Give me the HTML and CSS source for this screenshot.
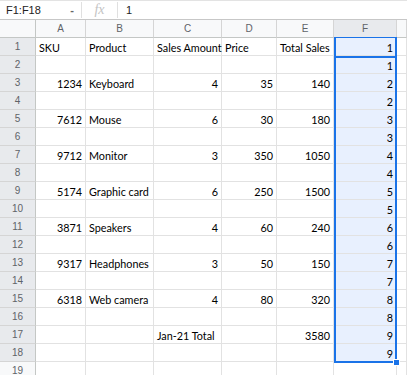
FILE: index.html
```html
<!DOCTYPE html>
<html lang="en">
<head>
    <meta charset="UTF-8">
    <meta name="viewport" content="width=device-width, initial-scale=1.0">
    <title>Sheet - F1:F18</title>
    <link rel="stylesheet" href="styles.css">
</head>
<body>
    <div class="formula-bar">
        <div class="name-box">
            <span>F1:F18</span>
            <span class="name-arrow">-</span>
        </div>
        <div class="fx">fx</div>
        <div class="formula-value">1</div>
    </div>

    <div class="sheet" id="sheet">
        <div class="selection"></div>
        <div class="active-cell"></div>
        <div class="fill-handle"></div>
    </div>

    <script>
        const columns = ['A', 'B', 'C', 'D', 'E', 'F', ''];

        // one entry per row: A..E, F holds the numbers in the selected range
        const rows = [
            ['SKU', 'Product', 'Sales Amount', 'Price', 'Total Sales', 1],
            ['', '', '', '', '', 1],
            [1234, 'Keyboard', 4, 35, 140, 2],
            ['', '', '', '', '', 2],
            [7612, 'Mouse', 6, 30, 180, 3],
            ['', '', '', '', '', 3],
            [9712, 'Monitor', 3, 350, 1050, 4],
            ['', '', '', '', '', 4],
            [5174, 'Graphic card', 6, 250, 1500, 5],
            ['', '', '', '', '', 5],
            [3871, 'Speakers', 4, 60, 240, 6],
            ['', '', '', '', '', 6],
            [9317, 'Headphones', 3, 50, 150, 7],
            ['', '', '', '', '', 7],
            [6318, 'Web camera', 4, 80, 320, 8],
            ['', '', '', '', '', 8],
            ['', '', 'Jan-21 Total', '', 3580, 9],
            ['', '', '', '', '', 9],
            ['', '', '', '', '', '']
        ];

        function buildSheet() {
            const sheet = document.getElementById('sheet');
            let html = '<div class="corner"></div>';

            columns.forEach(letter => {
                const cls = letter === 'F' ? 'col-head picked' : 'col-head';
                html += `<div class="${cls}">${letter}</div>`;
            });

            rows.forEach((row, i) => {
                const inRange = i < 18;
                html += `<div class="row-head${inRange ? ' picked' : ''}">${i + 1}</div>`;
                row.forEach((value, c) => {
                    let cls = 'cell';
                    if (typeof value === 'number') cls += ' num';
                    if (c === 5 && inRange) cls += ' in-range';
                    html += `<div class="${cls}">${value}</div>`;
                });
                html += '<div class="cell"></div>';
            });

            sheet.insertAdjacentHTML('afterbegin', html);
        }

        buildSheet();
    </script>
</body>
</html>
```

FILE: styles.css
```css
* {
    margin: 0;
    padding: 0;
    box-sizing: border-box;
}

body {
    font-family: Lato, 'Liberation Sans', Arial, sans-serif;
    background: #ffffff;
    color: #000;
    width: 407px;
    overflow: hidden;
}

/* formula bar */
.formula-bar {
    display: flex;
    align-items: center;
    height: 20px;
    border-top: 1px solid #e3e3e3;
    border-bottom: 1px solid #c7c7c7;
    font-family: 'Liberation Sans', Arial, sans-serif;
    font-size: 11px;
    color: #222;
}

.name-box {
    width: 82px;
    height: 16px;
    display: flex;
    align-items: center;
    justify-content: space-between;
    padding: 0 7px 0 6px;
    border-right: 1px solid #e0e0e0;
}

.name-arrow {
    color: #666;
    font-weight: 700;
}

.fx {
    width: 36px;
    height: 16px;
    text-align: center;
    font-family: 'Liberation Serif', serif;
    font-style: italic;
    font-size: 14px;
    line-height: 16px;
    color: #c4c4c4;
    border-right: 1px solid #e0e0e0;
}

.formula-value {
    padding-left: 8px;
}

/* grid */
.sheet {
    position: relative;
    display: grid;
    grid-template-columns: 36px 50px 68px 68px 55px 57px 63px 1fr;
    grid-auto-rows: 18px;
}

.corner,
.col-head,
.row-head {
    background: #f8f9fa;
    border-right: 1px solid #c4c7c5;
    border-bottom: 1px solid #c4c7c5;
    font-family: 'Liberation Sans', Arial, sans-serif;
    font-size: 10px;
    line-height: 17px;
    text-align: center;
    color: #5f6368;
}

.col-head {
    border-right-color: #d5d5d5;
}

.row-head {
    border-bottom-color: #d5d5d5;
}

.picked {
    background: #e8eaed;
}

.cell {
    border-right: 1px solid #e2e2e2;
    border-bottom: 1px solid #e2e2e2;
    padding: 1px 3px 0;
    font-size: 10.8px;
    line-height: 17px;
    white-space: nowrap;
    overflow: visible;
}

.num {
    text-align: right;
}

.in-range {
    background: #e8f0fe;
}

/* selection overlay */
.selection {
    position: absolute;
    left: 334px;
    top: 17px;
    width: 63px;
    height: 326px;
    border: 2px solid #1a73e8;
    border-top-width: 1px;
    pointer-events: none;
    z-index: 2;
}

.active-cell {
    position: absolute;
    left: 334px;
    top: 17px;
    width: 63px;
    height: 21px;
    border: 2px solid #1a73e8;
    border-top-width: 1px;
    z-index: 2;
}

.fill-handle {
    position: absolute;
    left: 393px;
    top: 339px;
    width: 7px;
    height: 7px;
    background: #1a73e8;
    border: 1px solid #ffffff;
    z-index: 3;
}
```
